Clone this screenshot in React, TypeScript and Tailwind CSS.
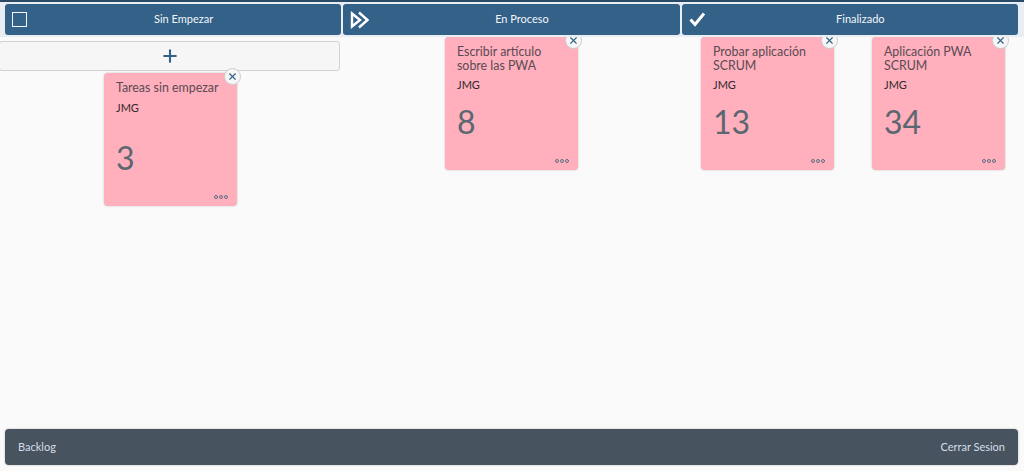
import { Plus, X } from "lucide-react";
import type { ReactNode } from "react";

const fontStack = { fontFamily: 'Lato, "Noto Sans", sans-serif' };

function ProcessIcon() {
  return (
    <svg width="20" height="18" viewBox="0 0 20 18" fill="none" stroke="#fff" strokeWidth="2.4">
      <path d="M2 2.5 L10 9 L2 15.5 Z" strokeLinejoin="miter" />
      <path d="M9 1.5 L17.5 9 L9 16.5" />
    </svg>
  );
}

function CheckIcon() {
  return (
    <svg width="17" height="15" viewBox="0 0 17 15" fill="none" stroke="#fff" strokeWidth="3">
      <path d="M1.5 7.5 L6 12.5 L15 1.5" />
    </svg>
  );
}

function HeaderButton({ icon, label }: { icon: ReactNode; label: string }) {
  return (
    <div className="flex h-[31px] flex-1 items-center rounded-[3px] bg-[#346187] pl-[7px] pr-[6px] text-[11px] text-[#f2f6fa]">
      <span className="flex h-[18px] w-[20px] shrink-0 items-center justify-start">{icon}</span>
      <span className="flex-1 text-center">{label}</span>
    </div>
  );
}

function Card({ title, points }: { title: string; points: number }) {
  return (
    <div className="relative flex h-[133px] w-[133px] flex-col rounded-[4px] bg-[#ffb0bc] pb-[28px] pl-[12px] pr-[10px] pt-[8px] shadow-[0_0_2px_rgba(0,0,0,0.25)]">
      <div className="text-[12.4px] leading-[13.5px] text-[#5a4a55]">{title}</div>
      <div className="mt-[6px] text-[11px] leading-[14px] text-[#32282e]">JMG</div>
      <div className="mt-auto text-[32px] leading-[40px] text-[#5b6770]">{points}</div>
      <div className="absolute bottom-[7px] right-[9px] flex gap-[1px]">
        <span className="h-[4px] w-[4px] rounded-full border border-[#5d6f85]" />
        <span className="h-[4px] w-[4px] rounded-full border border-[#5d6f85]" />
        <span className="h-[4px] w-[4px] rounded-full border border-[#5d6f85]" />
      </div>
      <div className="absolute right-[-4px] top-[-5px] flex h-[17px] w-[17px] items-center justify-center rounded-full border border-[#c8ccd0] bg-[#f7f7f7] text-[#346187]">
        <X size={11} strokeWidth={2.5} />
      </div>
    </div>
  );
}

export default function App() {
  return (
    <div className="flex h-[471px] w-[1024px] flex-col overflow-hidden bg-[#fafafa]" style={fontStack}>
      <div className="h-[2px] bg-[#2a4a66]" />
      <div className="flex h-[35px] gap-[2px] bg-[#e8eef3] pl-[5px] pr-[6px] pt-[2px]">
        <HeaderButton icon={<span className="block h-[15px] w-[15px] border border-[#f2f6fa]" />} label="Sin Empezar" />
        <HeaderButton icon={<ProcessIcon />} label="En Proceso" />
        <HeaderButton icon={<CheckIcon />} label="Finalizado" />
      </div>

      <div className="flex flex-1 overflow-hidden">
        <div className="flex w-[341px] flex-col items-center pt-[4px]">
          <div className="-ml-[2px] flex h-[30px] w-[341px] shrink-0 items-center justify-center rounded-[3px] border border-[#cfd1d3] bg-[#f6f6f6] text-[#346187]">
            <Plus size={20} strokeWidth={2.5} />
          </div>
          <div className="mt-[2px]">
            <Card title="Tareas sin empezar" points={3} />
          </div>
        </div>
        <div className="flex w-[341px] justify-center">
          <Card title="Escribir artículo sobre las PWA" points={8} />
        </div>
        <div className="flex w-[342px] justify-center gap-[38px]">
          <Card title="Probar aplicación SCRUM" points={13} />
          <Card title="Aplicación PWA SCRUM" points={34} />
        </div>
      </div>

      <div className="mb-[6px] ml-[5px] mr-[6px] flex h-[36px] items-center justify-between rounded-[4px] bg-[#47535f] px-[13px] text-[11px] text-[#d4dee8] shadow-[0_0_2px_rgba(0,0,0,0.3)]">
        <span>Backlog</span>
        <span>Cerrar Sesion</span>
      </div>
    </div>
  );
}
